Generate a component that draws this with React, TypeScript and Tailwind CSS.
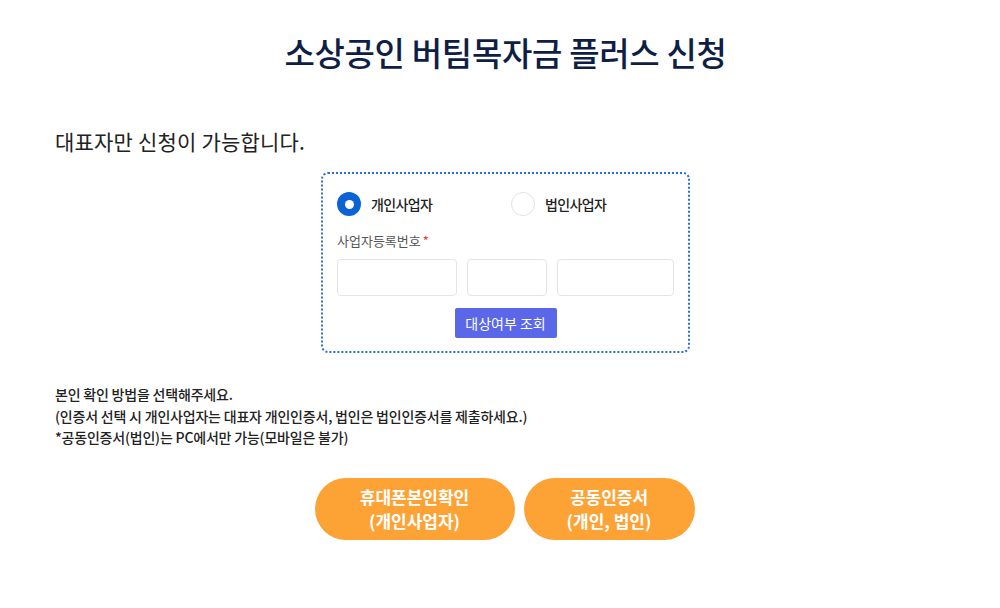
import React from 'react';

const font = { fontFamily: '"Noto Sans CJK KR", "Noto Sans", sans-serif' };

function Radio({ checked, label }: { checked: boolean; label: string }) {
    return (
        <label className="flex items-center gap-[10px] cursor-pointer">
            {checked ? (
                <span className="w-[24px] h-[24px] rounded-full bg-[#0b63d4] flex items-center justify-center">
                    <span className="w-[9px] h-[9px] rounded-full bg-white" />
                </span>
            ) : (
                <span className="w-[24px] h-[24px] rounded-full border border-[#e2e2e2] bg-white" />
            )}
            <span className="text-[14px] font-medium text-[#222] tracking-[-0.6px]">{label}</span>
        </label>
    );
}

export default function App() {
    const [type, setType] = React.useState('personal');

    return (
        <div className="w-[1000px] h-[608px] bg-white" style={font}>
            <h1 className="pt-[27px] pl-[11px] text-center text-[33px] font-medium leading-[50px] text-[#0f1e45] tracking-[-0.3px]">
                소상공인 버팀목자금 플러스 신청
            </h1>

            <p className="mt-[50px] pl-[55px] text-[21px] leading-[28px] text-[#222] tracking-[0.2px]">
                대표자만 신청이 가능합니다.
            </p>

            <div className="mt-[17px] ml-[321px] w-[369px] h-[181px] border-2 border-dotted border-[#2a6fd6] rounded-[7px] px-[14px] pt-[18px]">
                <div className="flex">
                    <div className="w-[174px]" onClick={() => setType('personal')}>
                        <Radio checked={type === 'personal'} label="개인사업자" />
                    </div>
                    <div onClick={() => setType('corp')}>
                        <Radio checked={type === 'corp'} label="법인사업자" />
                    </div>
                </div>
                <div className="mt-[15px] text-[13px] leading-[20px] text-[#555]">
                    사업자등록번호<span className="text-[#e53935] ml-[2px]">*</span>
                </div>
                <div className="mt-[8px] flex gap-[10px]">
                    <input className="w-[120px] h-[37px] border border-[#e4e4e4] rounded-[4px] outline-none" />
                    <input className="w-[80px] h-[37px] border border-[#e4e4e4] rounded-[4px] outline-none" />
                    <input className="w-[117px] h-[37px] border border-[#e4e4e4] rounded-[4px] outline-none" />
                </div>
                <div className="mt-[12px] flex justify-center">
                    <button className="w-[102px] h-[30px] bg-[#5a67e8] text-white text-[14px] rounded-[2px]">
                        대상여부 조회
                    </button>
                </div>
            </div>

            <div className="mt-[31px] pl-[55px] text-[14px] font-medium leading-[21.5px] text-[#222] tracking-[-0.2px]">
                <p>본인 확인 방법을 선택해주세요.</p>
                <p>(인증서 선택 시 개인사업자는 대표자 개인인증서, 법인은 법인인증서를 제출하세요.)</p>
                <p>*공동인증서(법인)는 PC에서만 가능(모바일은 불가)</p>
            </div>

            <div className="mt-[29px] flex justify-center gap-[9px] pl-[9px]">
                <button className="w-[200px] h-[62px] rounded-full bg-[#fda235] text-white text-[17px] font-bold leading-[24px]">
                    휴대폰본인확인<br />(개인사업자)
                </button>
                <button className="w-[171px] h-[62px] rounded-full bg-[#fda235] text-white text-[17px] font-bold leading-[24px]">
                    공동인증서<br />(개인, 법인)
                </button>
            </div>
        </div>
    );
}
